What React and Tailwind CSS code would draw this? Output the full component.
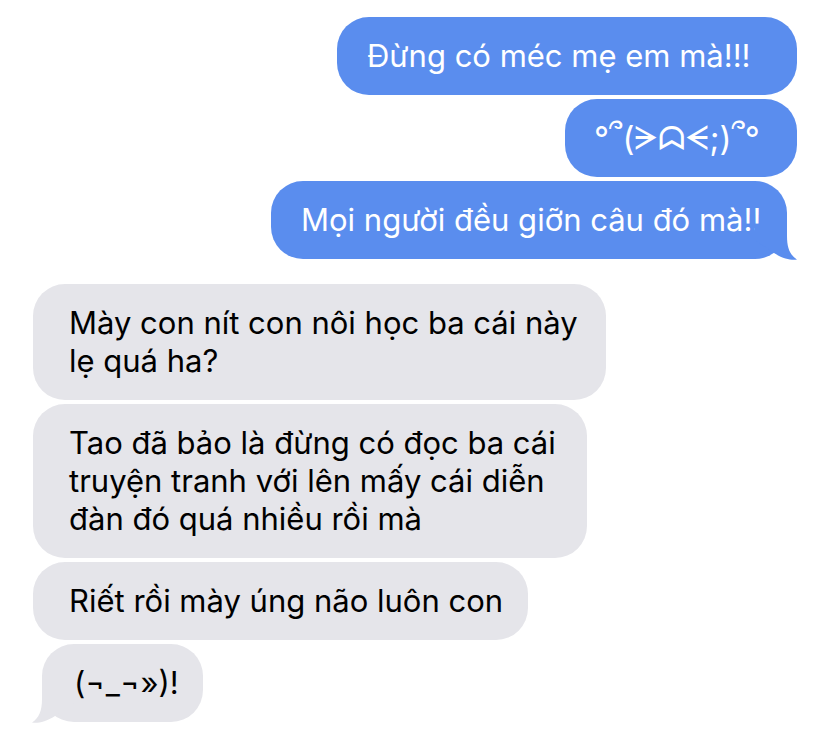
import React from "react";

function TailRight({ color }) {
  return (
    <svg
      className="absolute right-[-11px] bottom-[-2px] w-[48px] h-[41px]"
      viewBox="0 0 48 41"
      fill={color}
    >
      <path d="M37 5 L37 16 C37 28 40 35 47 39.5 C42 40.5 33 39 24 33 L5 20 L5 5 Z" />
    </svg>
  );
}

function TailLeft({ color }) {
  return (
    <svg
      className="absolute left-[-11px] bottom-[-2px] w-[48px] h-[41px] -scale-x-100"
      viewBox="0 0 48 41"
      fill={color}
    >
      <path d="M37 5 L37 16 C37 28 40 35 47 39.5 C42 40.5 33 39 24 33 L5 20 L5 5 Z" />
    </svg>
  );
}

const BLUE = "#5a8dee";
const GRAY = "#e5e5ea";

export default function App() {
  return (
    <div className="w-[828px] h-[742px] bg-white overflow-hidden font-[Inter,'DejaVu_Sans',sans-serif] text-[31px] leading-[38px] pt-[17px]">
      <div className="flex flex-col items-end gap-1 pr-[31px]">
        <div className="relative w-[460px] rounded-[32px] bg-[#5a8dee] text-white py-[20px] pl-[30px] whitespace-nowrap">
          Đừng có méc mẹ em mà!!!
        </div>
        <div className="relative w-[232px] rounded-[32px] bg-[#5a8dee] text-white py-[20px] pl-[29px] whitespace-nowrap text-[33px]">
          °՞(ᗒᗣᗕ;)՞°
        </div>
        <div className="relative w-[516px] mr-[10px] rounded-[32px] bg-[#5a8dee] text-white py-[20px] pl-[30px] whitespace-nowrap">
          Mọi người đều giỡn câu đó mà!!
          <TailRight color={BLUE} />
        </div>
      </div>
      <div className="flex flex-col items-start gap-1 pl-[33px] mt-[25px] text-black">
        <div className="relative w-[573px] rounded-[32px] bg-[#e5e5ea] py-[20px] pl-[36px] whitespace-nowrap">
          Mày con nít con nôi học ba cái này
          <br />
          lẹ quá ha?
        </div>
        <div className="relative w-[554px] rounded-[32px] bg-[#e5e5ea] py-[20px] pl-[36px] whitespace-nowrap">
          Tao đã bảo là đừng có đọc ba cái
          <br />
          truyện tranh với lên mấy cái diễn
          <br />
          đàn đó quá nhiều rồi mà
        </div>
        <div className="relative w-[495px] rounded-[32px] bg-[#e5e5ea] py-[20px] pl-[36px] whitespace-nowrap">
          Riết rồi mày úng não luôn con
        </div>
        <div className="relative w-[161px] ml-[9px] rounded-[32px] bg-[#e5e5ea] py-[20px] pl-[32px] whitespace-nowrap">
          (¬_¬»)!
          <TailLeft color={GRAY} />
        </div>
      </div>
    </div>
  );
}
